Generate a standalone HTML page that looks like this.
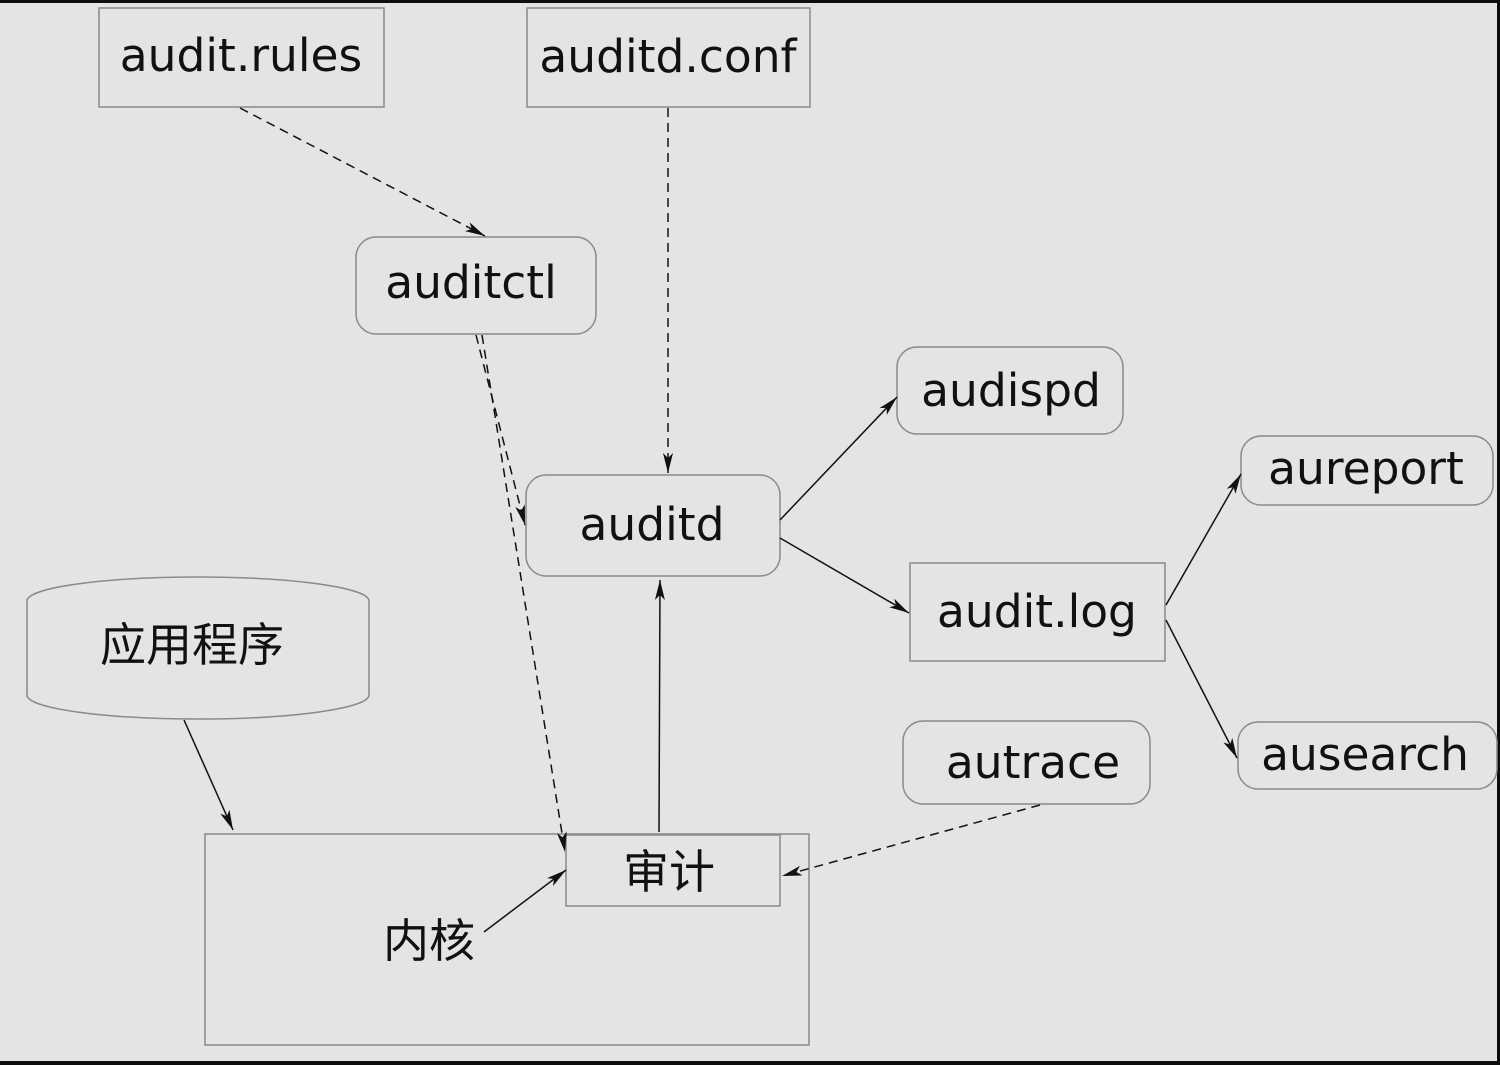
<!DOCTYPE html>
<html><head><meta charset="utf-8"><style>
html,body{margin:0;padding:0;background:#0d0d0d;}
svg{display:block}
text{font-family:"DejaVu Sans","Noto Sans CJK SC",sans-serif;font-size:45.5px;fill:#111;text-anchor:middle}
</style></head><body>
<svg width="1500" height="1065" viewBox="0 0 1500 1065" xmlns="http://www.w3.org/2000/svg">
<defs>
<marker id="a" viewBox="0 0 20 10" refX="20" refY="5" markerWidth="20" markerHeight="10" markerUnits="userSpaceOnUse" orient="auto">
<path d="M0,0 L20,5 L0,10 L5,5 Z" fill="#111"/>
</marker>
</defs>
<rect x="0" y="3" width="1497" height="1058" fill="#e4e4e4"/>
<g fill="none" stroke="#8a8a8a" stroke-width="1.5">
<rect x="99" y="8" width="285" height="99"/>
<rect x="527" y="8" width="283" height="99"/>
<rect x="356" y="237" width="240" height="97" rx="20"/>
<rect x="897" y="347" width="226" height="87" rx="20"/>
<rect x="526" y="475" width="254" height="101" rx="20"/>
<rect x="1241" y="436" width="252" height="69" rx="20"/>
<rect x="910" y="563" width="255" height="98"/>
<rect x="1238" y="722" width="259" height="67" rx="20"/>
<rect x="903" y="721" width="247" height="83" rx="20"/>
<rect x="27" y="577" width="342" height="142" rx="171" ry="24"/>
<rect x="205" y="834" width="604" height="211"/>
<rect x="566" y="835" width="214" height="71"/>
</g>
<g stroke="#111" stroke-width="1.5" fill="none" marker-end="url(#a)">
<path d="M240,108 L485,236" stroke-dasharray="9,6"/>
<path d="M668,108 L668,473" stroke-dasharray="9,6"/>
<path d="M476,335 L525,525" stroke-dasharray="9,6"/>
<path d="M482,335 L565,852" stroke-dasharray="9,6"/>
<path d="M780,520 L897,397"/>
<path d="M780,538 L909,613"/>
<path d="M1166,605 L1241,474"/>
<path d="M1166,620 L1237,758"/>
<path d="M184,720 L233,830"/>
<path d="M659,832 L660,580"/>
<path d="M1040,805 L782,876" stroke-dasharray="9,6"/>
<path d="M484,932 L566,870"/>
</g>
<text x="241" y="71">audit.rules</text>
<text x="668" y="72">auditd.conf</text>
<text x="471" y="298">auditctl</text>
<text x="1011" y="406">audispd</text>
<text x="652" y="540">auditd</text>
<text x="1366" y="484">aureport</text>
<text x="1037" y="627">audit.log</text>
<text x="1365" y="770">ausearch</text>
<text x="1033" y="778">autrace</text>
<text x="192" y="661" style="font-size:46px">应用程序</text>
<text x="669" y="888" style="font-size:46px">审计</text>
<text x="429" y="957" style="font-size:46px">内核</text>
</svg>
</body></html>
